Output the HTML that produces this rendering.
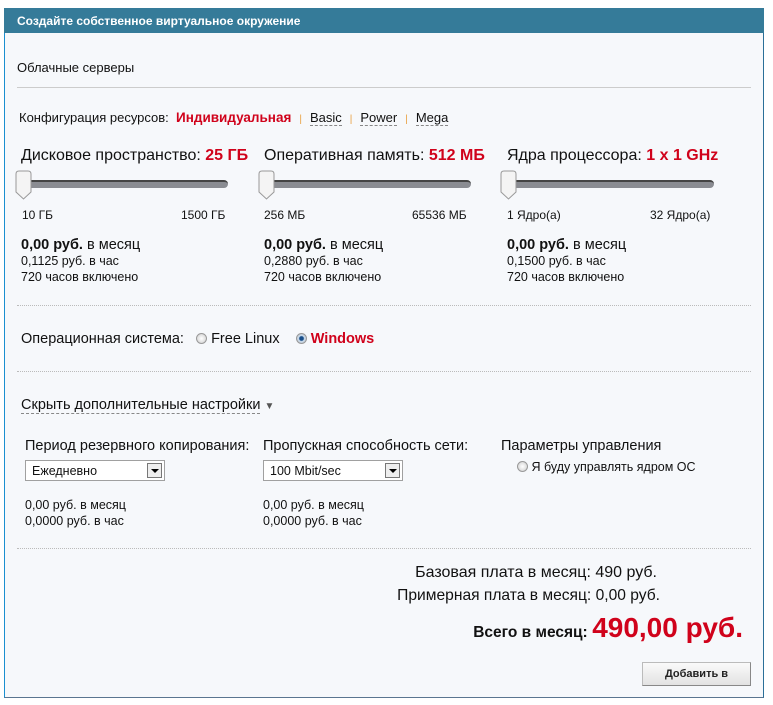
<!DOCTYPE html>
<html><head><meta charset="utf-8"><style>
*{margin:0;padding:0;box-sizing:border-box}
body{width:773px;height:705px;background:#fff;font-family:"Liberation Sans",Arial,sans-serif;color:#111;position:relative;overflow:hidden}
.a{position:absolute;white-space:nowrap}
.panel{position:absolute;left:4px;top:8px;width:760px;height:690px;background:#f6f8fb;border:1px solid #5a7590;border-left:1px solid #1a8fd0;border-right:1px solid #2a6f98}
.hdr{position:absolute;left:4px;top:8px;width:760px;height:25px;background:#357b99;color:#fff;font-weight:bold;font-size:12px;padding:6px 0 0 13px}
.f12{font-size:12px}.f14{font-size:14.5px}.f16{font-size:16px}
.red{color:#d0021b;font-weight:bold}
.track{position:absolute;height:8px;background:#8a8c92;border-radius:4px;border-top:2px solid #444}
.thumb{position:absolute;width:17px;height:30px}
.dot{position:absolute;left:17px;width:734px;border-top:1px dotted #bbb;height:0}
.sel{position:absolute;height:21px;border:1px solid #a0a0a0;background:#fff;font-size:12.5px;padding:3px 0 0 6px}
.sel i{position:absolute;right:2px;top:2px;width:15px;height:15px;border:1px solid #777;background:#eee}
.sel i:after{content:"";position:absolute;left:3px;top:5px;border:4px solid transparent;border-top:4px solid #000}
.rad{display:inline-block;width:11px;height:11px;border-radius:50%;border:1px solid #999;background:radial-gradient(#fff,#ccc);vertical-align:-1px}
.u{border-bottom:1px dashed #888}
.sep{color:#e8a040;font-size:10px;margin:0 8px}
</style></head><body>
<div class="panel"></div>
<div class="hdr">Создайте собственное виртуальное окружение</div>
<div class="a" style="left:17px;top:60px;font-size:13px">Облачные серверы</div>
<div class="a" style="left:17px;top:87px;width:734px;border-top:1px solid #ccc"></div>
<div class="a" style="left:19px;top:110px;font-size:13px">Конфигурация ресурсов:&nbsp; <span class="red" style="font-size:13.5px">Индивидуальная</span><span class="sep">|</span><span class="u">Basic</span><span class="sep">|</span><span class="u">Power</span><span class="sep">|</span><span class="u">Mega</span></div>

<div class="a f16" style="left:21px;top:147px">Дисковое пространство: <span class="red">25 ГБ</span></div>
<div class="a f16" style="left:264px;top:147px">Оперативная память: <span class="red">512 МБ</span></div>
<div class="a f16" style="left:507px;top:147px">Ядра процессора: <span class="red">1 x 1 GHz</span></div>

<div class="track" style="left:22px;top:180px;width:206px"></div>
<div class="track" style="left:266px;top:180px;width:205px"></div>
<div class="track" style="left:509px;top:180px;width:205px"></div>
<svg class="thumb" style="left:15px;top:170px" viewBox="0 0 17 30"><path d="M1 4Q1 1 4 1H13Q16 1 16 4V22L8.5 29L1 22Z" fill="#f4f4f4" stroke="#999"/></svg>
<svg class="thumb" style="left:258px;top:170px" viewBox="0 0 17 30"><path d="M1 4Q1 1 4 1H13Q16 1 16 4V22L8.5 29L1 22Z" fill="#f4f4f4" stroke="#999"/></svg>
<svg class="thumb" style="left:500px;top:170px" viewBox="0 0 17 30"><path d="M1 4Q1 1 4 1H13Q16 1 16 4V22L8.5 29L1 22Z" fill="#f4f4f4" stroke="#999"/></svg>

<div class="a f12" style="left:22px;top:208px">10 ГБ</div><div class="a f12" style="left:181px;top:208px">1500 ГБ</div>
<div class="a f12" style="left:264px;top:208px">256 МБ</div><div class="a f12" style="left:412px;top:208px">65536 МБ</div>
<div class="a f12" style="left:507px;top:208px">1 Ядро(а)</div><div class="a f12" style="left:650px;top:208px">32 Ядро(а)</div>

<div class="a" style="left:21px;top:237px;font-size:14.5px;line-height:16px"><b>0,00 руб.</b> в месяц<div style="font-size:12.5px">0,1125 руб. в час<br>720 часов включено</div></div>
<div class="a" style="left:264px;top:237px;font-size:14.5px;line-height:16px"><b>0,00 руб.</b> в месяц<div style="font-size:12.5px">0,2880 руб. в час<br>720 часов включено</div></div>
<div class="a" style="left:507px;top:237px;font-size:14.5px;line-height:16px"><b>0,00 руб.</b> в месяц<div style="font-size:12.5px">0,1500 руб. в час<br>720 часов включено</div></div>

<div class="dot" style="top:305px"></div>
<div class="a f14" style="left:21px;top:331px">Операционная система:&nbsp;&nbsp; <span class="rad"></span> Free Linux &nbsp;&nbsp; <span class="rad" style="background:radial-gradient(#1a4f8a 30%,#cde 45%,#bbb)"></span> <span class="red">Windows</span></div>
<div class="dot" style="top:371px"></div>
<div class="a f14" style="left:21px;top:397px"><span class="u">Скрыть дополнительные настройки</span> <span style="font-size:10px;color:#555">▼</span></div>

<div class="a f14" style="left:25px;top:438px">Период резервного копирования:</div>
<div class="a f14" style="left:263px;top:438px">Пропускная способность сети:</div>
<div class="a f14" style="left:501px;top:438px">Параметры управления</div>
<div class="sel" style="left:25px;top:460px;width:140px">Ежедневно<i></i></div>
<div class="sel" style="left:263px;top:460px;width:140px">100 Mbit/sec<i></i></div>
<div class="a" style="left:517px;top:460px;font-size:12.5px"><span class="rad"></span> Я буду управлять ядром ОС</div>
<div class="a f12" style="left:25px;top:497px;line-height:16px;font-size:12.5px">0,00 руб. в месяц<br>0,0000 руб. в час</div>
<div class="a f12" style="left:263px;top:497px;line-height:16px;font-size:12.5px">0,00 руб. в месяц<br>0,0000 руб. в час</div>

<div class="dot" style="top:548px"></div>
<div class="a f16" style="right:116px;top:564px">Базовая плата в месяц: 490 руб.</div>
<div class="a" style="right:113px;top:587px;font-size:15.6px">Примерная плата в месяц: 0,00 руб.</div>
<div class="a" style="right:30px;top:612px"><b style="font-size:15.5px">Всего в месяц:</b> <span class="red" style="font-size:28px">490,00 руб.</span></div>
<div class="a" style="left:642px;top:662px;width:109px;height:24px;border:1px solid #bbb;border-right-color:#888;border-bottom-color:#888;background:linear-gradient(#fafafa,#e2e2e2);font-size:11px;font-weight:bold;text-align:center;padding-top:5px;color:#222">Добавить в</div>
</body></html>
